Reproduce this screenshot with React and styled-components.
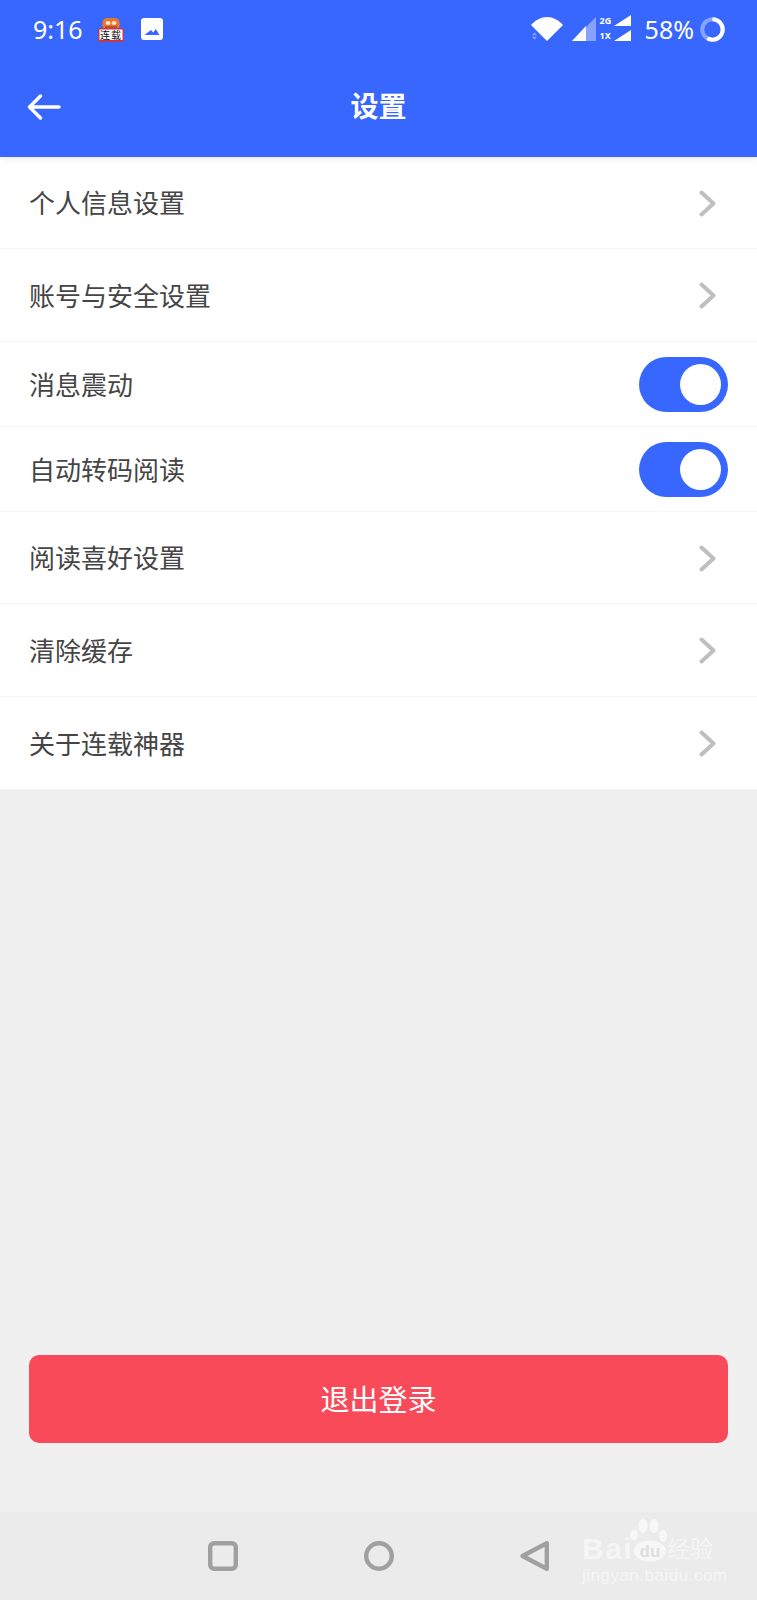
import React from "react"
import styled, { createGlobalStyle } from "styled-components"

const BLUE = "#3867ff"
const CJK = `"Noto Sans CJK SC", "Noto Sans", sans-serif`

const rows = [
  { label: "个人信息设置", height: 92, type: "link" },
  { label: "账号与安全设置", height: 93, type: "link" },
  { label: "消息震动", height: 85, type: "toggle" },
  { label: "自动转码阅读", height: 85, type: "toggle" },
  { label: "阅读喜好设置", height: 92, type: "link" },
  { label: "清除缓存", height: 93, type: "link" },
  { label: "关于连载神器", height: 92, type: "link", last: true },
]

const App = () => {
  return (
    <Page>
      <GlobalStyle />
      <Header>
        <StatusBar>
          <StatusLeft>
            <Clock>9:16</Clock>
            <AppIcon />
            <PictureIcon />
          </StatusLeft>
          <StatusRight>
            <WifiIcon />
            <SignalIcon />
            <DualSim>
              <SimLine>
                <SimLabel>2G</SimLabel>
                <SimBars />
              </SimLine>
              <SimLine>
                <SimLabel>1X</SimLabel>
                <SimBars />
              </SimLine>
            </DualSim>
            <Battery>58%</Battery>
            <BatteryRing />
          </StatusRight>
        </StatusBar>
        <TitleBar>
          <BackButton>
            <svg width="34" height="26" viewBox="0 0 34 26" fill="none">
              <path
                d="M32 13H3M13.5 2L2.5 13l11 11"
                stroke="#fff"
                strokeWidth="3.4"
                strokeLinecap="round"
                strokeLinejoin="round"
              />
            </svg>
          </BackButton>
          <Title>设置</Title>
        </TitleBar>
      </Header>

      <List>
        {rows.map((row) => (
          <Row key={row.label} $height={row.height} $last={row.last}>
            <RowLabel>{row.label}</RowLabel>
            {row.type === "link" ? (
              <Chevron />
            ) : (
              <Toggle>
                <Knob />
              </Toggle>
            )}
          </Row>
        ))}
      </List>

      <Footer>
        <LogoutButton>退出登录</LogoutButton>
      </Footer>

      <NavBar>
        <NavIcons>
          <svg width="32" height="32" viewBox="0 0 32 32" fill="none">
            <rect x="3.2" y="3.2" width="25.6" height="25.6" rx="4" stroke="#a0a0a0" strokeWidth="4.4" />
          </svg>
          <svg width="32" height="32" viewBox="0 0 32 32" fill="none">
            <circle cx="16" cy="16" r="12.8" stroke="#a0a0a0" strokeWidth="4.4" />
          </svg>
          <svg width="32" height="32" viewBox="0 0 32 32" fill="none">
            <path
              d="M27.800 3.200v25.600L3.500 16z"
              stroke="#a0a0a0"
              strokeWidth="4.400"
              strokeLinejoin="round"
            />
          </svg>
        </NavIcons>
        <Watermark>
          <WatermarkTop>
            <WatermarkBrand>Bai</WatermarkBrand>
            <Paw />
            <WatermarkName>经验</WatermarkName>
          </WatermarkTop>
          <WatermarkUrl>jingyan.baidu.com</WatermarkUrl>
        </Watermark>
      </NavBar>
    </Page>
  )
}

const AppIcon = () => (
  <AppIconWrap>
    <svg width="26" height="25" viewBox="0 0 26 25">
      <path d="M5 3l3-2h10l3 2 1 5-2 4H6L4 8z" fill="#e8772e" />
      <ellipse cx="10" cy="6" rx="2.500" ry="2" fill="#fbe3c4" />
      <ellipse cx="16" cy="6" rx="2.500" ry="2" fill="#fbe3c4" />
      <rect x="7" y="9" width="12" height="3" fill="#c9482c" />
      <rect x="0" y="11" width="26" height="14" rx="1.500" fill="#c0394f" />
      <rect x="1.500" y="12.500" width="23" height="10.500" fill="#fff" />
    </svg>
    <AppIconText>连载</AppIconText>
  </AppIconWrap>
)

const PictureIcon = () => (
  <svg width="22" height="22" viewBox="0 0 22 22">
    <path
      fillRule="evenodd"
      d="M3 0h16a3 3 0 0 1 3 3v16a3 3 0 0 1-3 3H3a3 3 0 0 1-3-3V3a3 3 0 0 1 3-3zM3.500 17h15l-3.600-6-2.700 3.400-2.200-2.400z"
      fill="#fff"
    />
  </svg>
)

const WifiIcon = () => (
  <WifiSvg width="32" height="24" viewBox="0 0 32 24">
    <path d="M0 8C4.500 3 10 0 16 0S27.500 3 32 8L16 24z" fill="#fff" />
    <path d="M1 18.200l2.500-3 2.500 3zM1 19.800h5l-2.500 3z" fill="#fff" opacity="0.4" />
  </WifiSvg>
)

const SignalIcon = () => (
  <svg width="24" height="24" viewBox="0 0 24 24">
    <path d="M24 0v24H0z" fill="#fff" opacity="0.4" />
    <path d="M14 9v15H0z" fill="#fff" />
  </svg>
)

const SimBars = () => (
  <svg width="17" height="11" viewBox="0 0 17 11">
    <path d="M17 0v11H0z" fill="#fff" />
  </svg>
)

const BatteryRing = () => (
  <svg width="25" height="25" viewBox="0 0 25 25" fill="none">
    <circle cx="12.500" cy="12.500" r="10.200" stroke="#fff" strokeOpacity="0.4" strokeWidth="4" />
    <circle
      cx="12.500"
      cy="12.500"
      r="10.200"
      stroke="#fff"
      strokeWidth="4"
      strokeDasharray="37.200 64.100"
      transform="rotate(-90 12.500 12.500)"
    />
  </svg>
)

const Chevron = () => (
  <ChevronWrap>
    <svg width="17" height="27" viewBox="0 0 17 27" fill="none">
      <path
        d="M2.500 2.500L14.500 13.500L2.500 24.500"
        stroke="#bfbfbf"
        strokeWidth="4"
        strokeLinecap="round"
        strokeLinejoin="round"
      />
    </svg>
  </ChevronWrap>
)

const Paw = () => (
  <PawSvg width="40" height="44" viewBox="0 0 40 44" fill="none">
    <g fill="#fff" fillOpacity="0.62">
      <ellipse cx="5" cy="17" rx="4" ry="5.500" />
      <ellipse cx="14" cy="8" rx="4.500" ry="7" />
      <ellipse cx="25" cy="8" rx="4.500" ry="7" />
      <ellipse cx="34" cy="18" rx="4" ry="6" />
      <ellipse cx="21" cy="33" rx="16" ry="10.500" />
    </g>
    <text x="21" y="39" textAnchor="middle" fontSize="17" fontWeight="700" fontFamily="Liberation Sans, sans-serif" fill="#dedede">
      du
    </text>
  </PawSvg>
)

const GlobalStyle = createGlobalStyle`
  html, body {
    margin: 0;
    padding: 0;
    background: #f0f0f0;
  }
`

const Page = styled.div`
  width: 757px;
  height: 1600px;
  display: flex;
  flex-direction: column;
  background: #f0f0f0;
  font-family: ${CJK};
  overflow: hidden;
`

const Header = styled.header`
  height: 157px;
  flex: none;
  background: ${BLUE};
  color: #fff;
  position: relative;
  z-index: 1;
  box-shadow: 0 1px 6px rgba(0, 0, 0, 0.12);
`

const StatusBar = styled.div`
  height: 58px;
  display: flex;
  justify-content: space-between;
  align-items: center;
  padding: 0 32px 0 33px;
`

const StatusLeft = styled.div`
  display: flex;
  align-items: center;
`

const Clock = styled.span`
  font-family: "Noto Sans", sans-serif;
  font-size: 25px;
  width: 65px;
`

const AppIconWrap = styled.div`
  position: relative;
  width: 26px;
  height: 25px;
  margin-right: 17px;
  line-height: 0;
`

const AppIconText = styled.span`
  position: absolute;
  left: 0;
  right: 0;
  bottom: 2px;
  font-family: "Noto Sans CJK SC", serif;
  font-size: 10px;
  line-height: 10px;
  letter-spacing: 1px;
  color: #111;
  text-align: center;
  white-space: nowrap;
`

const StatusRight = styled.div`
  display: flex;
  align-items: center;
`

const WifiSvg = styled.svg`
  margin-right: 9px;
`

const DualSim = styled.div`
  display: flex;
  flex-direction: column;
  gap: 4px;
  margin: -2px 14px 0 4px;
  width: 31px;
`

const SimLine = styled.div`
  display: flex;
  align-items: flex-end;
  justify-content: space-between;
  height: 11px;
`

const SimLabel = styled.span`
  font-family: "Noto Sans", sans-serif;
  font-size: 9px;
  line-height: 11px;
  font-weight: 700;
`

const Battery = styled.span`
  font-family: "Noto Sans", sans-serif;
  font-size: 25px;
  margin-right: 6px;
`

const TitleBar = styled.div`
  height: 99px;
  display: flex;
  align-items: center;
  justify-content: center;
  position: relative;
`

const BackButton = styled.div`
  position: absolute;
  left: 27px;
  top: 36px;
  line-height: 0;
`

const Title = styled.h1`
  margin: 0 0 6px;
  font-size: 28px;
  font-weight: 700;
  line-height: 1;
`

const List = styled.div`
  flex: none;
  background: #fff;
`

const Row = styled.div`
  height: ${(p) => p.$height}px;
  box-sizing: border-box;
  display: flex;
  align-items: center;
  justify-content: space-between;
  padding: 0 29px;
  border-bottom: ${(p) => (p.$last ? "none" : "1px solid #f5f5f5")};
`

const RowLabel = styled.span`
  font-size: 26px;
  color: #454545;
  margin-bottom: 2px;
`

const ChevronWrap = styled.div`
  line-height: 0;
  margin: 1px 12px 0 0;
`

const Toggle = styled.div`
  width: 89px;
  height: 55px;
  border-radius: 28px;
  background: ${BLUE};
  display: flex;
  align-items: center;
  justify-content: flex-end;
  padding-right: 7px;
  box-sizing: border-box;
`

const Knob = styled.div`
  width: 41px;
  height: 41px;
  border-radius: 50%;
  background: #fff;
`

const Footer = styled.div`
  flex: 1;
  display: flex;
  align-items: flex-end;
  padding: 0 29px 69px;
`

const LogoutButton = styled.button`
  width: 100%;
  height: 88px;
  padding: 0 0 2px;
  border: none;
  border-radius: 10px;
  background: #f94a5a;
  color: #fff;
  font-family: ${CJK};
  font-size: 29px;
`

const NavBar = styled.nav`
  height: 88px;
  flex: none;
  background: #ebebeb;
  position: relative;
`

const NavIcons = styled.div`
  width: 344px;
  margin-left: 207px;
  height: 88px;
  display: flex;
  align-items: center;
  justify-content: space-between;
`

const Watermark = styled.div`
  position: absolute;
  left: 582px;
  top: 6px;
  width: 136px;
  color: rgba(255, 255, 255, 0.55);
`

const WatermarkTop = styled.div`
  display: flex;
  align-items: flex-end;
  height: 44px;
`

const WatermarkBrand = styled.span`
  font-family: "Liberation Sans", sans-serif;
  font-size: 30px;
  font-weight: 700;
  letter-spacing: 1.500px;
  line-height: 30px;
  margin: 0 -4px -2px 0;
`

const PawSvg = styled.svg`
  flex: none;
`

const WatermarkName = styled.span`
  font-family: ${CJK};
  font-size: 23px;
  line-height: 26px;
  margin: 0 0 2px -2px;
`

const WatermarkUrl = styled.div`
  font-family: "Liberation Sans", sans-serif;
  font-size: 17px;
  line-height: 18px;
  letter-spacing: 0.5px;
  margin-top: 5px;
  white-space: nowrap;
`

export default App
